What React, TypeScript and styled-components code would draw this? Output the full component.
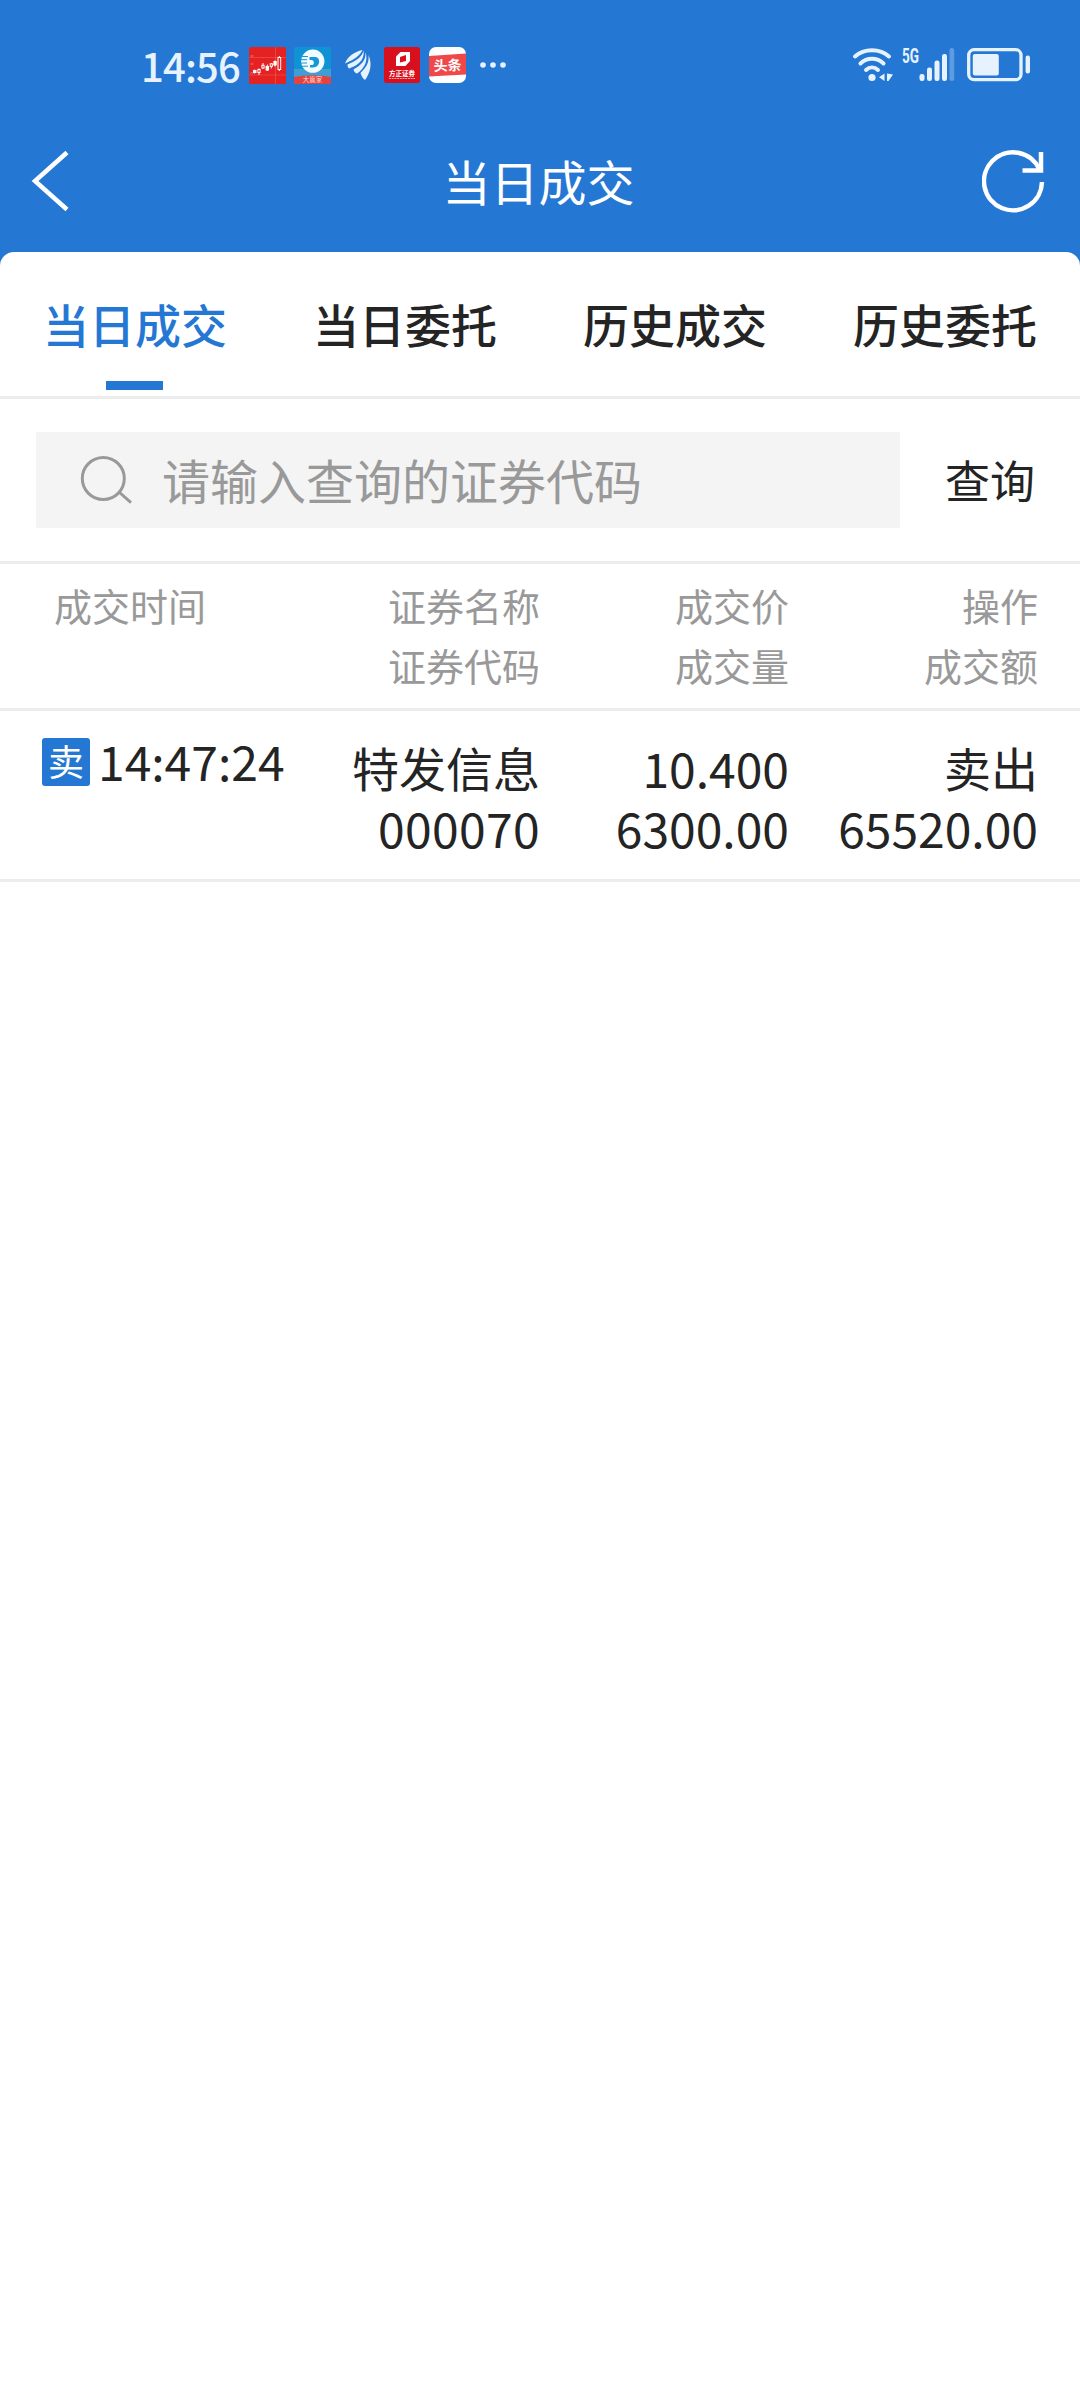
import React from "react";
import styled, { createGlobalStyle } from "styled-components";

const cjk = `"Noto Sans CJK SC", "Noto Sans", sans-serif`;
const blue = "#2577d4";
const ice = "#e6f3ff";
const ink = "#242424";
const grey = "#999999";
const line = "#ededed";

const Global = createGlobalStyle`
  * { box-sizing: border-box; }
  body { margin: 0; background: #fff; font-family: ${cjk}; }
  button, input { font: inherit; border: 0; background: none; padding: 0; margin: 0; }
  svg { display: block; flex: none; }
`;

const Screen = styled.div`
  width: 1080px;
  min-height: 2400px;
  background: #fff;
`;

const Top = styled.header`
  height: 266px;
  background: ${blue};
`;

const StatusBar = styled.div`
  height: 130px;
  padding: 0 50px 0 141px;
  display: flex;
  align-items: center;
  justify-content: space-between;
`;

const StatusGroup = styled.div`
  display: flex;
  align-items: center;
`;

const Slot = styled.span<{ $before: number }>`
  margin-left: ${(p) => p.$before}px;
`;

const Clock = styled.span`
  width: 100px;
  font-size: 40px;
  line-height: 60px;
  font-weight: 500;
  letter-spacing: -0.8px;
  color: ${ice};
`;

const TitleBar = styled.div`
  height: 102px;
  padding: 0 34px 0 31px;
  display: grid;
  grid-template-columns: 64px 1fr 64px;
  align-items: center;
`;

const Title = styled.h1`
  margin: 0;
  padding-bottom: 2px;
  text-align: center;
  font-size: 48px;
  line-height: 70px;
  font-weight: 400;
  color: #fff;
`;

const IconButton = styled.button<{ $end?: boolean }>`
  display: flex;
  justify-content: ${(p) => (p.$end ? "flex-end" : "flex-start")};
`;

const Sheet = styled.main`
  margin-top: -14px;
  border-radius: 14px 14px 0 0;
  background: #fff;
`;

const Tabs = styled.nav`
  height: 147px;
  display: grid;
  grid-template-columns: repeat(4, 1fr);
  border-bottom: 3px solid ${line};
`;

const Tab = styled.button<{ $active?: boolean }>`
  display: flex;
  flex-direction: column;
  align-items: center;
  justify-content: flex-start;
  padding-top: 38px;
  font-size: 46px;
  line-height: 66px;
  font-weight: 500;
  color: ${(p) => (p.$active ? blue : ink)};
  &::after {
    content: "";
    width: 57px;
    height: 9px;
    margin: 25px 1px 0 0;
    background: ${(p) => (p.$active ? blue : "transparent")};
  }
`;

const SearchRow = styled.form`
  height: 165px;
  padding: 0 45px 0 36px;
  display: flex;
  align-items: center;
  justify-content: space-between;
  border-bottom: 3px solid ${line};
`;

const SearchBox = styled.label`
  width: 864px;
  height: 96px;
  padding-left: 44px;
  display: flex;
  align-items: center;
  gap: 30px;
  background: #f4f4f4;
`;

const SearchInput = styled.input`
  width: 640px;
  height: 72px;
  padding-bottom: 3px;
  font-size: 48px;
  outline: none;
  &::placeholder {
    color: ${grey};
    opacity: 1;
  }
`;

const QueryButton = styled.button`
  font-size: 45px;
  line-height: 66px;
  color: ${ink};
`;

const Row = styled.div<{ $head?: boolean }>`
  height: ${(p) => (p.$head ? 147 : 171)}px;
  padding: ${(p) => (p.$head ? "11px 42px 0 54px" : "26px 42px 0 42px")};
  display: flex;
  border-bottom: 3px solid ${line};
  font-size: ${(p) => (p.$head ? 38 : 47)}px;
  line-height: 60px;
  color: ${(p) => (p.$head ? grey : ink)};
`;

const TimeCell = styled.div`
  flex: 1;
  display: flex;
  align-items: flex-start;
`;

const Cell = styled.div<{ $w: number }>`
  width: ${(p) => p.$w}px;
  display: flex;
  flex-direction: column;
  align-items: flex-end;
  white-space: nowrap;
`;

const Figure = styled.span<{ $spaced?: boolean }>`
  font-size: 48px;
  letter-spacing: ${(p) => (p.$spaced ? "0.36px" : "normal")};
`;

const Time = styled.span`
  font-size: 48px;
  line-height: 60px;
  margin: -7px 0 0 8px;
`;

const Badge = styled.span`
  width: 48px;
  height: 48px;
  margin-top: 1px;
  padding-bottom: 4px;
  border-radius: 3px;
  display: flex;
  align-items: center;
  justify-content: center;
  background: ${blue};
  color: #fff;
  font-size: 36px;
  line-height: 44px;
`;

const StockApp = () => (
  <svg width="37" height="37" viewBox="0 0 37 37">
    <rect width="37" height="37" rx="1.5" fill="#e52222" />
    <path d="M0 10.500H37M0 28H37M26.500 0V37" stroke="#ef5a50" strokeWidth=".6" />
    <path d="M1.500 9h3M1.500 17h3M1.500 26h3" stroke="#f08a80" strokeWidth=".8" />
    <g stroke="#fff" strokeWidth="1">
      <path d="M5.700 22.500v4M10 21.500v6.500M14 16v6M18.300 17.500v6.500M22.300 16v5.500M26 13.500v6M30.300 9v15" />
      <rect x="4.500" y="23.500" width="2.500" height="2" fill="#fff" />
      <rect x="8.900" y="22.500" width="2.200" height="3" fill="#e52222" />
      <rect x="12.900" y="18.300" width="2.200" height="2.700" fill="#e52222" />
      <rect x="17.100" y="19.500" width="2.400" height="3.500" fill="#fff" />
      <rect x="21.200" y="16.800" width="2.200" height="2.500" fill="#e52222" />
      <rect x="24.900" y="14.500" width="2.300" height="3.500" fill="#fff" />
      <rect x="29" y="10.500" width="2.700" height="12" fill="#e52222" />
    </g>
  </svg>
);

const TelecomApp = () => (
  <svg width="37" height="37" viewBox="0 0 37 37">
    <rect width="37" height="37" rx="1.500" fill="#0f93d4" />
    <rect y="22" width="37" height="8" fill="#3f9fd2" />
    <path d="M0 30Q18.500 26.500 37 30V35.500Q37 37 35.500 37H1.500Q0 37 0 35.500z" fill="#e2433f" />
    <circle cx="18.800" cy="14.200" r="11.600" fill="#f2fbff" />
    <path d="M15.500 10H21.500C27 10.500 26.500 20.500 19 20.500H16V18H18.500C20.500 17.500 20.500 13 17.500 13H15.500z" fill="#1498d6" />
    <path d="M6 9.500h8M6 12.700h7M6 16h7M8 19.200h6" stroke="#1498d6" strokeWidth="1" />
    <text x="18.500" y="35.300" fontSize="6.500" fill="#ffd9d6" textAnchor="middle" fontFamily={cjk}>
      大赢家
    </text>
  </svg>
);

const WingApp = () => (
  <svg width="27" height="32" viewBox="0 0 27 32">
    <g fill={ice}>
      <path d="M17.500 1C9 3 3 7 0 14.500C6 11.500 13 9.500 17.500 1z" />
      <path d="M18.500 1.500C17 9 10 12 2.500 15.500C2.500 17.500 3 18.500 4 19.500C12 16.500 20 12 18.500 1.500z" />
      <path d="M20.500 3C21 12 16 16 8.500 20.500C9 22.500 10 24 12 24.500C19 20 23.500 12 20.500 3z" />
      <path d="M23.500 6C24.500 14 20.500 19 15.500 24C16.500 27.500 18 29.500 20 31C26 23 27 14 23.500 6z" />
    </g>
  </svg>
);

const FounderApp = () => (
  <svg width="36" height="36" viewBox="0 0 36 36">
    <rect width="36" height="36" rx="2.500" fill="#d80f1c" />
    <path d="M12 9.500L16.500 5H26V14L21.500 19H12z" fill="#fff" />
    <path d="M16 10L22 8V14L16 15.500z" fill="#d80f1c" />
    <text x="18" y="29" fontSize="6.800" fontWeight="700" fill="#fff" textAnchor="middle" textLength="26" lengthAdjust="spacingAndGlyphs" fontFamily={cjk}>
      方正证券
    </text>
    <path d="M5 31.500h26" stroke="#f3a5a8" strokeWidth="1" strokeDasharray="2 .7" />
  </svg>
);

const ToutiaoApp = () => (
  <svg width="37" height="36" viewBox="0 0 37 36">
    <rect width="37" height="36" rx="7" fill="#fff" />
    <path d="M0 9L37 6.500V27.500L0 29.500z" fill="#f04848" />
    <text x="18.500" y="23.500" fontSize="14" fontWeight="700" fill="#fff" textAnchor="middle" transform="rotate(-2 18 18)" fontFamily={cjk}>
      头条
    </text>
  </svg>
);

const MoreDots = () => (
  <svg width="26" height="6" viewBox="0 0 26 6" fill={ice}>
    <circle cx="3" cy="3" r="2.800" />
    <circle cx="13" cy="3" r="2.800" />
    <circle cx="23" cy="3" r="2.800" />
  </svg>
);

const Wifi = () => (
  <svg width="42" height="36" viewBox="0 0 42 36">
    <g fill="none" stroke={ice} strokeWidth="4" strokeLinecap="round">
      <path d="M3 9.500C12 1.200 28 1.200 37 9.500" />
      <path d="M8.500 16.500C15 10.300 25 10.300 31.500 16.500" />
      <path d="M14 23C17.500 19.800 22.500 19.800 26 23" />
    </g>
    <circle cx="20" cy="30.500" r="3.600" fill={ice} />
    <path d="M32.500 26.500V34L27 30.200zM35 26.500L41 27.500L36.500 34H35z" fill={ice} />
  </svg>
);

const Signal = () => (
  <svg width="54" height="48" viewBox="0 -6 54 48" fill={ice}>
    <text x="0" y="16" fontSize="20" fontWeight="700" textLength="17" lengthAdjust="spacingAndGlyphs" fontFamily="Roboto, sans-serif">
      5G
    </text>
    <rect x="17.500" y="27" width="5" height="7" rx="2.200" />
    <rect x="25" y="20.500" width="5" height="13.500" rx="2.200" />
    <rect x="32.500" y="13.500" width="5" height="20.500" rx="2.200" />
    <rect x="40" y="7" width="5" height="27" rx="2.200" />
    <rect x="47.500" y="1" width="4.700" height="33" rx="2.200" opacity=".3" />
  </svg>
);

const Battery = () => (
  <svg width="63" height="34" viewBox="0 0 63 34">
    <rect x="1.700" y="1.700" width="52.300" height="30" rx="5.500" fill="none" stroke={ice} strokeWidth="3.300" />
    <rect x="5.800" y="6" width="26" height="21.400" rx="2" fill={ice} />
    <rect x="58.600" y="7.600" width="4.400" height="18" rx="2" fill={ice} />
  </svg>
);

const BackIcon = () => (
  <svg width="38" height="62" viewBox="0 0 38 62">
    <path d="M36 2.500L4 31L36 59.500" fill="none" stroke="#fff" strokeWidth="4.500" />
  </svg>
);

const RefreshIcon = () => (
  <svg width="64" height="64" viewBox="0 0 64 64" fill="none" stroke="#fff" strokeWidth="4.500">
    <path d="M60 33A29 29 0 1 1 57.500 20.500" />
    <path d="M59 3v18.500H40.500" />
  </svg>
);

const SearchIcon = () => (
  <svg width="52" height="52" viewBox="0 0 52 52" fill="none" stroke={grey} strokeWidth="3">
    <circle cx="23.300" cy="24.500" r="21" />
    <path d="M39 38L51 48.700" />
  </svg>
);

const tabs = ["当日成交", "当日委托", "历史成交", "历史委托"];

const columns = [
  { width: 200, top: "证券名称", bottom: "证券代码" },
  { width: 249, top: "成交价", bottom: "成交量" },
  { width: 249, top: "操作", bottom: "成交额" },
];

export default function App() {
  return (
    <Screen>
      <Global />
      <Top>
        <StatusBar>
          <StatusGroup>
            <Clock>14:56</Clock>
            <Slot $before={8}><StockApp /></Slot>
            <Slot $before={8}><TelecomApp /></Slot>
            <Slot $before={14}><WingApp /></Slot>
            <Slot $before={12}><FounderApp /></Slot>
            <Slot $before={9}><ToutiaoApp /></Slot>
            <Slot $before={14}><MoreDots /></Slot>
          </StatusGroup>
          <StatusGroup>
            <Wifi />
            <Slot $before={8}><Signal /></Slot>
            <Slot $before={11}><Battery /></Slot>
          </StatusGroup>
        </StatusBar>
        <TitleBar>
          <IconButton aria-label="返回">
            <BackIcon />
          </IconButton>
          <Title>当日成交</Title>
          <IconButton $end aria-label="刷新">
            <RefreshIcon />
          </IconButton>
        </TitleBar>
      </Top>
      <Sheet>
        <Tabs>
          {tabs.map((t, i) => (
            <Tab key={t} $active={i === 0}>
              {t}
            </Tab>
          ))}
        </Tabs>
        <SearchRow onSubmit={(e) => e.preventDefault()}>
          <SearchBox>
            <SearchIcon />
            <SearchInput placeholder="请输入查询的证券代码" />
          </SearchBox>
          <QueryButton>查询</QueryButton>
        </SearchRow>
        <Row $head>
          <TimeCell>成交时间</TimeCell>
          {columns.map((c) => (
            <Cell key={c.top} $w={c.width}>
              <span>{c.top}</span>
              <span>{c.bottom}</span>
            </Cell>
          ))}
        </Row>
        <Row>
          <TimeCell>
            <Badge>卖</Badge>
            <Time>14:47:24</Time>
          </TimeCell>
          <Cell $w={200}>
            <span>特发信息</span>
            <Figure $spaced>000070</Figure>
          </Cell>
          <Cell $w={249}>
            <Figure>10.400</Figure>
            <Figure>6300.00</Figure>
          </Cell>
          <Cell $w={249}>
            <span>卖出</span>
            <Figure>65520.00</Figure>
          </Cell>
        </Row>
      </Sheet>
    </Screen>
  );
}
